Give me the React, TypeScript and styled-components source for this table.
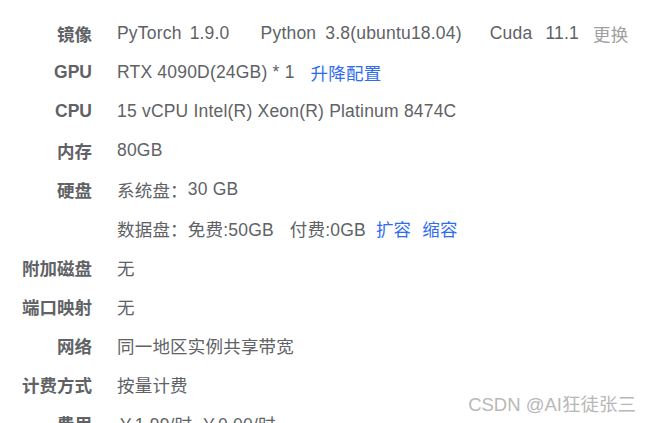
import React from 'react';
import styled, { createGlobalStyle } from 'styled-components';

const GlobalStyle = createGlobalStyle`
  html, body {
    margin: 0;
    padding: 0;
    background: #ffffff;
    overflow: hidden;
  }
  body {
    font-family: "Liberation Sans", "Noto Sans CJK SC", sans-serif;
  }
`;

const Page = styled.div`
  position: relative;
  width: 650px;
  height: 423px;
  overflow: hidden;
  padding-top: 14px;
  box-sizing: border-box;
`;

const Table = styled.div`
  display: grid;
  grid-template-columns: 92px 1fr;
  column-gap: 25px;
  grid-auto-rows: 39px;
`;

const Label = styled.div`
  display: flex;
  align-items: center;
  justify-content: flex-end;
  font-size: 17.5px;
  font-weight: bold;
  color: #606266;
  white-space: nowrap;
`;

const Value = styled.div`
  display: flex;
  align-items: center;
  font-size: 17.5px;
  letter-spacing: 0.2px;
  color: #606266;
  white-space: nowrap;
`;

const Part = styled.span<{ gap?: number }>`
  margin-left: ${({ gap }) => gap ?? 0}px;
`;

const Link = styled.span<{ gap?: number }>`
  margin-left: ${({ gap }) => gap ?? 0}px;
  color: #2f6cf0;
`;

const Muted = styled.span<{ gap?: number }>`
  margin-left: ${({ gap }) => gap ?? 0}px;
  color: #a0a0a0;
`;

const Watermark = styled.div`
  position: absolute;
  right: 14px;
  bottom: 7px;
  font-size: 18.5px;
  color: #b8b8b8;
  text-shadow: 0 0 1px #ffffff;
  white-space: nowrap;
`;

export default function App() {
  return (
    <>
      <GlobalStyle />
      <Page>
        <Table>
          <Label>镜像</Label>
          <Value>
            <Part>PyTorch</Part>
            <Part gap={8}>1.9.0</Part>
            <Part gap={31}>Python</Part>
            <Part gap={9}>3.8(ubuntu18.04)</Part>
            <Part gap={28}>Cuda</Part>
            <Part gap={13}>11.1</Part>
            <Muted gap={14}>更换</Muted>
          </Value>

          <Label>GPU</Label>
          <Value>
            <Part>RTX 4090D(24GB) * 1</Part>
            <Link gap={16}>升降配置</Link>
          </Value>

          <Label>CPU</Label>
          <Value>15 vCPU Intel(R) Xeon(R) Platinum 8474C</Value>

          <Label>内存</Label>
          <Value>80GB</Value>

          <Label>硬盘</Label>
          <Value>
            <Part>系统盘：</Part>
            <Part>30 GB</Part>
          </Value>

          <Label />
          <Value>
            <Part>数据盘：</Part>
            <Part>免费:50GB</Part>
            <Part gap={16}>付费:0GB</Part>
            <Link gap={10}>扩容</Link>
            <Link gap={11}>缩容</Link>
          </Value>

          <Label>附加磁盘</Label>
          <Value>无</Value>

          <Label>端口映射</Label>
          <Value>无</Value>

          <Label>网络</Label>
          <Value>同一地区实例共享带宽</Value>

          <Label>计费方式</Label>
          <Value>按量计费</Value>

          <Label>费用</Label>
          <Value>
            <Part>￥1.99/时</Part>
            <Part gap={8}>￥0.00/时</Part>
          </Value>
        </Table>
        <Watermark>CSDN @AI狂徒张三</Watermark>
      </Page>
    </>
  );
}
